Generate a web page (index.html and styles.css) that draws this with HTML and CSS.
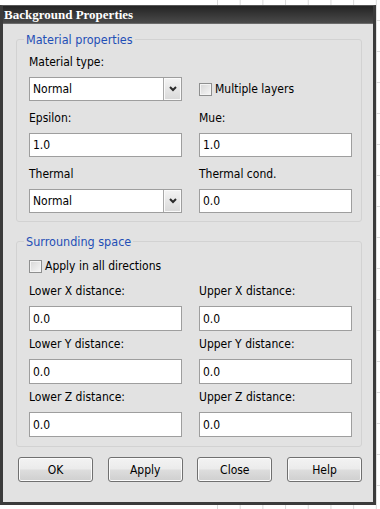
FILE: index.html
```html
<!DOCTYPE html>
<html lang="en">
<head>
  <meta charset="UTF-8">
  <title>Background Properties</title>
  <link rel="stylesheet" href="styles.css">
</head>
<body>
  <div class="window">
    <div class="titlebar">Background Properties</div>
    <div class="client">

      <fieldset class="group">
        <legend>Material properties</legend>
        <div class="fields">
          <div class="field">
            <label>Material type:</label>
            <div class="select">
              <span class="value">Normal</span>
              <span class="drop"><svg width="8" height="6" viewBox="0 0 8 6"><polyline points="1,1 4,4 7,1" /></svg></span>
            </div>
          </div>
          <div class="field field-check">
            <span class="check"><span class="box"></span>Multiple layers</span>
          </div>

          <div class="field">
            <label>Epsilon:</label>
            <input type="text" value="1.0">
          </div>
          <div class="field">
            <label>Mue:</label>
            <input type="text" value="1.0">
          </div>

          <div class="field">
            <label>Thermal</label>
            <div class="select">
              <span class="value">Normal</span>
              <span class="drop"><svg width="8" height="6" viewBox="0 0 8 6"><polyline points="1,1 4,4 7,1" /></svg></span>
            </div>
          </div>
          <div class="field">
            <label>Thermal cond.</label>
            <input type="text" value="0.0">
          </div>
        </div>
      </fieldset>

      <fieldset class="group group-space">
        <legend>Surrounding space</legend>
        <span class="check check-all"><span class="box"></span>Apply in all directions</span>
        <div class="fields">
          <div class="field">
            <label>Lower X distance:</label>
            <input type="text" value="0.0">
          </div>
          <div class="field">
            <label>Upper X distance:</label>
            <input type="text" value="0.0">
          </div>

          <div class="field">
            <label>Lower Y distance:</label>
            <input type="text" value="0.0">
          </div>
          <div class="field">
            <label>Upper Y distance:</label>
            <input type="text" value="0.0">
          </div>

          <div class="field">
            <label>Lower Z distance:</label>
            <input type="text" value="0.0">
          </div>
          <div class="field">
            <label>Upper Z distance:</label>
            <input type="text" value="0.0">
          </div>
        </div>
      </fieldset>

      <div class="actions">
        <button>OK</button>
        <button>Apply</button>
        <button>Close</button>
        <button>Help</button>
      </div>

    </div>
  </div>
</body>
</html>
```

FILE: styles.css
```css
:root {
  --client: #e2e2e2;
  --frame: #3b3b3b;
  --group-line: #d2d2d2;
  --legend: #1f4fb6;
  --field-line: #9e9e9e;
  --ui-font: "DejaVu Sans Condensed", "Liberation Sans", sans-serif;
}

* {
  margin: 0;
  padding: 0;
  box-sizing: border-box;
}

body {
  background-color: #fff;
  background-image:
    linear-gradient(90deg, #fff 210px, transparent 210px),
    linear-gradient(90deg, #d9d9d9 1px, transparent 1px),
    linear-gradient(#dcdcdc 1px, transparent 1px);
  background-size: 100% 100%, 22.7px 100%, 100% 31px;
  background-position: 0 0, 217px 0, 0 20px;
  font-family: var(--ui-font);
  font-size: 12px;
  color: #000;
}

.window {
  width: 376px;
  height: 500px;
  margin-top: 5px;
  border: 3px solid var(--frame);
  border-top: 1px solid #575757;
  display: flex;
  flex-direction: column;
}

.titlebar {
  height: 18px;
  line-height: 17px;
  padding-left: 1px;
  background: linear-gradient(#242424, #4a4a4a);
  border-bottom: 1px solid #6b6b6b;
  color: #fff;
  font-family: "Liberation Serif", serif;
  font-weight: bold;
  font-size: 13px;
}

.client {
  flex: 1;
  background-color: var(--client);
  padding: 8px 11px 0 13px;
}

.group {
  border: 1px solid var(--group-line);
  border-radius: 3px;
  padding: 8px 9px 8px 12px;
  min-width: 0;
}

.group legend {
  margin-left: -5px;
  padding: 0 2px;
  line-height: 15px;
  font-size: 12.5px;
  color: var(--legend);
}

.group-space {
  margin-top: 12px;
  padding-top: 10px;
  padding-bottom: 9px;
}

.fields {
  display: grid;
  grid-template-columns: 1fr 1fr;
  column-gap: 17px;
  row-gap: 10px;
}

.group-space .fields {
  row-gap: 6px;
}

.group-space input {
  height: 25px;
}

.field {
  display: flex;
  flex-direction: column;
}

.field > label {
  line-height: 15px;
  margin-bottom: 7px;
}

.field-check {
  padding-top: 22px;
}

.check {
  display: flex;
  align-items: center;
  height: 24px;
  line-height: 15px;
}

.check-all {
  height: 15px;
  margin-bottom: 10px;
}

.check .box {
  width: 13px;
  height: 13px;
  margin-right: 3px;
  border: 1px solid #8e8f8f;
  background: linear-gradient(135deg, #d6d6d6, #f7f7f7);
  box-shadow: inset 0 0 0 1px #f4f4f4;
}

input {
  height: 24px;
  width: 100%;
  border: 1px solid var(--field-line);
  padding: 0 3px;
  font-family: var(--ui-font);
  font-size: 12px;
  color: #000;
  background: #fff;
  outline: none;
}

.select {
  height: 24px;
  display: flex;
  border: 1px solid var(--field-line);
  background: #fff;
}

.select .value {
  flex: 1;
  padding-left: 3px;
  line-height: 22px;
}

.select .drop {
  width: 18px;
  display: flex;
  align-items: center;
  justify-content: center;
  border-left: 1px solid #a8a8a8;
  background: linear-gradient(#f4f4f4, #d9d9d9);
  box-shadow: inset 0 0 0 1px #fafafa;
}

.select .drop polyline {
  fill: none;
  stroke: #2b2b2b;
  stroke-width: 2;
}

.actions {
  display: flex;
  justify-content: space-between;
  margin-top: 10px;
  padding-left: 2px;
}

button {
  width: 75px;
  height: 25px;
  border: 1px solid #707070;
  border-radius: 3px;
  background: linear-gradient(#f3f3f3 0%, #ebebeb 48%, #dddddd 52%, #cfcfcf 100%);
  box-shadow: inset 0 0 0 1px #fbfbfb;
  font-family: var(--ui-font);
  font-size: 12px;
  color: #000;
}
```
